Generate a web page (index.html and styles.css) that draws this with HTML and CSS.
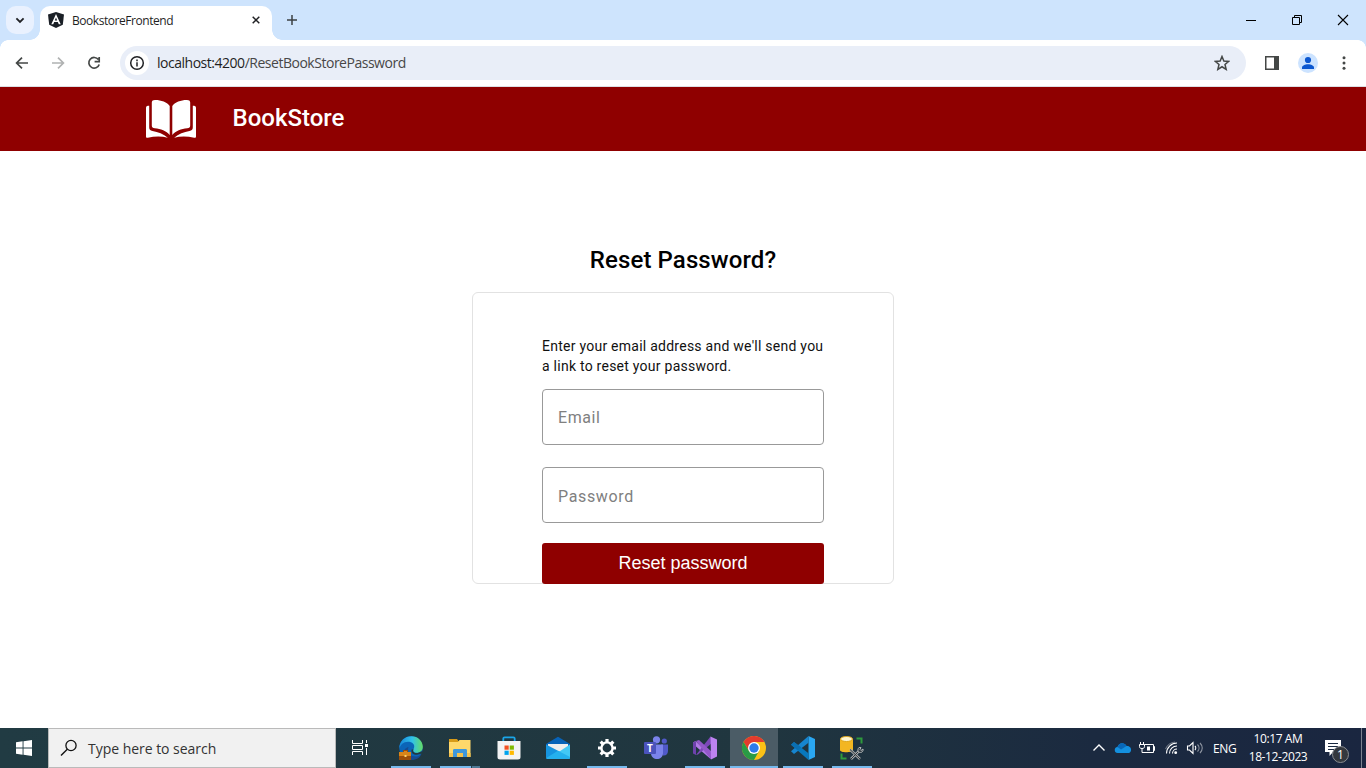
FILE: index.html
```html
<!DOCTYPE html>
<html lang="en">
<head>
<meta charset="utf-8">
<title>BookstoreFrontend</title>
<link rel="stylesheet" href="styles.css">
</head>
<body>
<div class="screen">
  <div class="tabstrip">
    <button class="tab-search" aria-label="Search tabs"><svg width="10" height="7" viewBox="0 0 10 7"><path d="M1.4 1.3 5 4.9l3.6-3.6" fill="none" stroke="#202124" stroke-width="1.8"/></svg></button>
    <div class="tab">
      <svg class="favicon" width="16" height="16" viewBox="0 0 16 16"><path d="M8 0l8 2.6-1.2 10.2L8 16l-6.800-3.200L0 2.600z" fill="#1a1f26"/><path d="M8 2 3.300 12.200h1.900l1-2.300h3.600l1 2.300h1.900zM8 5.600l1.200 2.800H6.800z" fill="#fff"/></svg>
      <span class="tab-title">BookstoreFrontend</span>
      <svg class="tab-close" width="8" height="8" viewBox="0 0 8 8"><path d="M.7.7l6.600 6.600M7.300.7.7 7.300" stroke="#202124" stroke-width="1.500"/></svg>
    </div>
    <svg class="new-tab" width="10" height="10" viewBox="0 0 10 10"><path d="M5 0v10M0 5h10" stroke="#3c4043" stroke-width="1.500"/></svg>
    <div class="window-controls">
      <svg width="46" height="40" viewBox="0 0 46 40"><path d="M18 20.500h10" stroke="#000"/></svg>
      <svg width="46" height="40" viewBox="0 0 46 40"><path d="M18.500 17.500h7v7h-7zM20.500 17.500v-2h7v7h-2" fill="none" stroke="#000"/></svg>
      <svg width="46" height="40" viewBox="0 0 46 40"><path d="M18 15l10 10M28 15 18 25" stroke="#000" stroke-width="1.100"/></svg>
    </div>
  </div>

  <div class="toolbar">
    <div class="nav">
      <svg width="36" height="36" viewBox="0 0 36 36"><path d="M24 18H13M18 12.600 12.600 18l5.400 5.400" fill="none" stroke="#444746" stroke-width="1.700"/></svg>
      <svg width="36" height="36" viewBox="0 0 36 36"><path d="M12 18h11M18 12.600l5.400 5.400-5.400 5.400" fill="none" stroke="#b0b2b2" stroke-width="1.700"/></svg>
      <svg width="36" height="36" viewBox="0 0 36 36"><path d="M22.400 14.600A5.300 5.300 0 1 0 23.200 19.400M23.200 12v4.600h-4.600" fill="none" stroke="#444746" stroke-width="1.700"/></svg>
    </div>
    <div class="omnibox">
      <span class="site-info"><svg width="16" height="16" viewBox="0 0 16 16"><circle cx="8" cy="8" r="6.300" fill="none" stroke="#202124" stroke-width="1.500"/><path d="M8 7.200v4.200M8 4.600v1.600" stroke="#202124" stroke-width="1.500"/></svg></span>
      <span class="url"><b>localhost:4200</b>/ResetBookStorePassword</span>
      <svg class="star" width="16" height="16" viewBox="0 0 16 16"><path d="M8 1.500l1.850 4.500 4.850.4-3.700 3.150 1.150 4.750L8 11.750 3.850 14.300 5 9.550 1.300 6.400 6.150 6z" fill="none" stroke="#444746" stroke-width="1.500"/></svg>
    </div>
    <div class="actions">
      <svg width="36" height="36" viewBox="0 0 36 36"><path d="M11.750 11.750h12.500v12.500h-12.500z" fill="none" stroke="#444746" stroke-width="1.500"/><path d="M20 11h5v14h-5z" fill="#444746"/></svg>
      <svg width="36" height="36" viewBox="0 0 36 36"><circle cx="18" cy="18" r="10" fill="#cce3ff"/><circle cx="18" cy="15" r="3.100" fill="#0b57d0"/><path d="M12 24v-1.500c0-2 3-3.300 6-3.300s6 1.300 6 3.300V24z" fill="#0b57d0"/></svg>
      <svg width="36" height="36" viewBox="0 0 36 36" fill="#444746"><circle cx="18" cy="12.800" r="1.500"/><circle cx="18" cy="18" r="1.500"/><circle cx="18" cy="23.200" r="1.500"/></svg>
    </div>
  </div>

  <header class="site-header">
    <svg width="52" height="40" viewBox="0 0 52 40"><g fill="#fff"><path d="M24.700 7C22.500 3 15 .8 10 1 8 1 6.800 1.800 6.800 3.500v23c0 2 1 2.700 3 2.800 6 .5 11.500 2.700 14.900 6.700z"/><path d="M27.300 7c2.200-4 9.700-6.200 14.700-6 2 0 3.200.8 3.200 2.500v23c0 2-1 2.700-3 2.800-6 .5-11.500 2.700-14.900 6.700z"/><path d="M4.200 6.800C2 6.800 1 7.200 1 9v28.500c0 1 .6 1.500 1.800 1.200 7-1.500 14-1.500 20 0C18.500 35 13 33 7.500 32c-2.400-.4-3.300-1.300-3.300-3.700z"/><path d="M47.800 6.800c2.200 0 3.200.4 3.200 2.200v28.500c0 1-.6 1.500-1.800 1.200-7-1.500-14-1.500-20 0C33.500 35 39 33 44.500 32c2.400-.4 3.300-1.300 3.300-3.700z"/></g></svg>
    <span class="brand">BookStore</span>
  </header>

  <main class="page">
    <h1 class="title">Reset Password?</h1>
    <form class="card">
      <p class="hint">Enter your email address and we'll send you<br>a link to reset your password.</p>
      <input class="field" type="text" placeholder="Email">
      <input class="field field-password" type="password" placeholder="Password">
      <button class="submit" type="button">Reset password</button>
    </form>
  </main>

  <footer class="taskbar">
    <div class="start"><svg width="16" height="16" viewBox="0 0 16 16"><path d="M0 2.200 6.600 1.300v6.300H0zM7.500 1.200 16 0v7.600H7.500zM0 8.400h6.600v6.300L0 13.800zM7.500 8.400H16V16l-8.500-1.200z" fill="#fff"/></svg></div>
    <div class="search">
      <svg width="18" height="18" viewBox="0 0 18 18"><circle cx="11" cy="6.500" r="5.100" fill="none" stroke="#111" stroke-width="1.300"/><path d="M7.300 10.200 1 16.500" stroke="#111" stroke-width="1.400"/></svg>
      <span>Type here to search</span>
    </div>
    <div class="apps">
      <div class="app task-view"><svg width="24" height="24" viewBox="0 0 24 24"><path d="M4.500 4v3.500h10V4M4.500 19v-3.500h10V19M4.500 9.500h10v4h-10zM18.500 4v3M18.500 12v7" fill="none" stroke="#fff"/><path d="M17 8h3v3h-3z" fill="#fff"/></svg></div>
      <div class="app running"><svg width="24" height="24" viewBox="0 0 24 24"><defs><linearGradient id="edge-top" x1="0" x2="1"><stop stop-color="#1686d9"/><stop offset=".55" stop-color="#31c2e8"/><stop offset="1" stop-color="#64dc65"/></linearGradient></defs><circle cx="12" cy="12" r="11.700" fill="#0b65b8"/><path d="M.3 13C.2 5 6 .3 12.500.3c6.500 0 11.300 5 11.300 10.500 0 4-3 6-6.300 6-3 0-4.500-1.500-3-3.500 2.500-5-1.500-7.500-5.500-7.500C4.500 5.800 1 9 .3 13z" fill="url(#edge-top)"/><path d="M9.500 11c-2 6 2.500 10 8 9.500 2 0 4-1 5-2.500-3 7-12 7.500-17 3-3-4 0-9 4-10z" fill="#174b91"/><path d="M14.500 13.200c-1.500 4 4 5 8 2l1.500 2-6 1.500c-4 0-6-2-5.500-5z" fill="#213943"/><path d="M4 16v-1.500h5V16h3v8H0v-8z" fill="#d78519"/><path d="M0 20h12v4H0zM4 16v-2h5v2H8v-1H5v1z" fill="#9c4e08"/><path d="M5.500 19h2v2h-2z" fill="#ffd36a"/></svg></div>
      <div class="app running grouped"><svg width="24" height="24" viewBox="0 0 24 24"><path d="M1 3h8l1.500 2H22v5H1z" fill="#d89b18"/><path d="M1 6h9l1.500-2H22.500v17H1z" fill="#ffd86b"/><path d="M1 17h21.500v4H1z" fill="#f5c34d"/><path d="M5 21v-6.500c0-1 .5-1.500 1.500-1.500h11c1 0 1.500.5 1.500 1.500V21h-4v-4H9v4z" fill="#3e98dc"/></svg></div>
      <div class="app"><svg width="24" height="24" viewBox="0 0 24 24"><path d="M6.300 6V2.600c0-.8.5-1.300 1.300-1.300h8.800c.8 0 1.300.5 1.300 1.300V6" fill="none" stroke="#1aa5e8" stroke-width="1.800"/><path d="M.5 5h23v16c0 1.800-1 2.500-2.500 2.500H3C1.500 23.500.5 22.800.5 21z" fill="#f3f3f4"/><path d="M7.500 9.500h4.200v4.200H7.500z" fill="#f25022"/><path d="M12.700 9.500h4.200v4.200h-4.200z" fill="#7fba00"/><path d="M7.500 14.700h4.200v4.200H7.500z" fill="#00a4ef"/><path d="M12.700 14.700h4.200v4.200h-4.200z" fill="#ffb900"/></svg></div>
      <div class="app"><svg width="24" height="24" viewBox="0 0 24 24"><path d="M0 8 12 .8 24 8v5H0z" fill="#0763b8"/><path d="M2 8h20v8l-10 4-10-4z" fill="#eee"/><path d="M0 8.500 24 21c0 1.500-.5 2-2 2H2c-1.500 0-2-.5-2-2z" fill="#1794df"/><path d="M24 8.500 2 23h20c1.500 0 2-.5 2-2z" fill="#43c8f5"/><path d="M12 14.800 24 21c0 1.500-.5 2-2 2H2c-1 0-1.500-.3-1.800-1z" fill="#25b0ed"/></svg></div>
      <div class="app running"><svg width="24" height="24" viewBox="0 0 24 24"><g stroke="#fff" stroke-width="3.200"><path d="M12 3v4M12 17v4M3 12h4M17 12h4M5.640 5.640l2.800 2.800M15.560 15.560l2.800 2.800M5.640 18.360l2.800-2.800M15.560 8.440l2.800-2.800"/></g><circle cx="12" cy="12" r="5.600" fill="#20353f" stroke="#fff" stroke-width="2.400"/></svg></div>
      <div class="app"><svg class="teams" width="24" height="24" viewBox="0 0 24 24"><circle cx="20.300" cy="5" r="2.600" fill="#5059c9"/><circle cx="12.500" cy="3.800" r="3.600" fill="#7b83eb"/><path d="M17 8.500h7V15c0 3-2 5-5 4.500z" fill="#5059c9"/><path d="M7 8.500h12V17c0 4-3 6-6 6s-6-2-6-6z" fill="#7b83eb"/><rect y="6" width="12" height="12" rx="1" fill="#4b53bc"/><text x="6" y="15.600" text-anchor="middle" fill="#fff">T</text></svg></div>
      <div class="app running"><svg width="24" height="24" viewBox="0 0 24 24"><path d="M0 6.500 2.500 5 15 17l3 6.300L0 8z" fill="#b17be6"/><path d="M0 6.500 3 5v14l-3-1.500z" fill="#6e42ad"/><path d="M3 19 17.500.5 19 7 5 18.500z" fill="#7c48b8"/><path d="M3 5l3-1 13 12-1 7.500z" fill="#9358c9"/><path d="M17.500.5 24 3.500v17l-6 3z" fill="#bd83f0"/></svg></div>
      <div class="app running active"><svg width="24" height="24" viewBox="0 0 24 24"><circle cx="12" cy="12" r="12" fill="#fbc116"/><path d="M1.600 6A12 12 0 0 1 22.400 6H12L7 15z" fill="#e33b2e"/><path d="M1.600 6A12 12 0 0 0 12 24l5-9-10 0z" fill="#299b46"/><circle cx="12" cy="12" r="6" fill="#fff"/><circle cx="12" cy="12" r="4.700" fill="#2d7bea"/></svg></div>
      <div class="app running"><svg width="24" height="24" viewBox="0 0 24 24"><path d="M17.500 0 24 3v18l-6.500 3z" fill="#2aa7f2"/><path d="M17.500 0v6.700L3 18l-3-2.700z" fill="#1685cf"/><path d="M0 8.700 3 6l14.500 11.300V24z" fill="#0878bd"/><path d="M0 8.700 3 6l7 5.300-3 3z" fill="#0b6fb1"/></svg></div>
      <div class="app running"><svg width="24" height="24" viewBox="0 0 24 24"><path d="M0 3v11c0 3 12 3 13 0V3z" fill="#f3b622"/><ellipse cx="6.500" cy="3" rx="6" ry="2.500" fill="#fff5ce" stroke="#dfa61b"/><path d="M16.500 2.500h5v5M1.500 17.500v5h5" fill="none" stroke="#2e9a3d" stroke-width="2"/><path d="M10 13.500 20 23M20 14 11 23" stroke="#a4a8aa" stroke-width="2.500"/><path d="M10 13.500 20 23M20 14 11 23" stroke="#30363a" stroke-width="1"/><path d="M19 11.500c-2 2-1 5 1.500 5 2 0 3-2 2.500-3.500l-2 1.500-1-1 1-2z" fill="#313c43" stroke="#b2b5b7"/></svg></div>
    </div>
    <div class="tray">
      <svg width="24" height="24" viewBox="0 0 24 24"><path d="m6.500 14.500 5.500-5.500 5.500 5.500" fill="none" stroke="#fff" stroke-width="1.400"/></svg>
      <svg width="24" height="24" viewBox="0 0 24 24"><path d="M7 17a3 3 0 0 1-.5-6C7.500 6.500 13.500 5.800 15.500 10c3.500-.3 5 2.500 4.500 4.500s-1.500 2.500-3 2.500z" fill="#1490df"/><path d="M6.500 11C7.500 6.500 13.500 5.800 15.500 10L10 13.500z" fill="#0867b8"/></svg>
      <svg width="24" height="24" viewBox="0 0 24 24" fill="none" stroke="#fff"><path d="M9.500 8.500h9v8h-9M18.500 10.500h1v4h-1"/><path d="M12 10.500h3v4h-3z" fill="#fff" stroke="none"/><path d="M5.500 6v3M8.500 6v3M4.500 8.500h5v2c0 1.500-1 2-2.500 2s-2.500-.5-2.500-2zM7 12.500v4h3"/></svg>
      <svg width="24" height="24" viewBox="0 0 24 24" fill="none" stroke="#fff" stroke-width="1.100"><path d="M7.500 17.500A10.500 10.500 0 0 1 18 7M10.500 17.500A7.500 7.500 0 0 1 18 10M13.500 17.500A4.500 4.500 0 0 1 18 13"/><path d="M6.500 13A12 12 0 0 1 16 6" opacity=".35"/><circle cx="16.700" cy="16.700" r="1.400" fill="#fff" stroke="none"/></svg>
      <svg width="24" height="24" viewBox="0 0 24 24" fill="none" stroke="#fff" stroke-width="1.100"><path d="M4.500 10h2L10 6.500v11L6.500 14h-2z"/><path d="M12 10c1 1 1 3 0 4"/><g opacity=".5"><path d="M14.500 8.500c2 2 2 5 0 7M17 7c3 3 3 7 0 10"/></g></svg>
      <span class="lang">ENG</span>
      <div class="clock"><span>10:17 AM</span><span class="date">18-12-2023</span></div>
      <div class="notifications"><svg width="18" height="18" viewBox="0 0 18 18"><path d="M1 1h16v12H9l-3.500 4v-4H1z" fill="#fff"/><path d="M4 4.500h10M4 7.500h10M4 10.500h6" stroke="#1b2a41"/></svg><span class="badge">1</span></div>
    </div>
  </footer>
</div>
</body>
</html>
```

FILE: styles.css
```css
* { box-sizing: border-box; }
body { margin: 0; background: #fff; font-family: Roboto, sans-serif; overflow: hidden; }
button, input { font: inherit; border: 0; padding: 0; }
svg { display: block; flex: none; }
.screen { width: 1366px; height: 768px; display: flex; flex-direction: column; background: #fff; }

.tabstrip { height: 40px; flex: none; display: flex; align-items: center; padding-left: 6px; background: #cee4fd; }
.tab-search { width: 28px; height: 28px; border-radius: 10px; background: #e9f1fe; display: flex; align-items: center; justify-content: center; }
.tab { position: relative; width: 232px; height: 34px; margin: 6px 0 0 6px; padding: 0 12px 6px 8px; border-radius: 10px 10px 0 0; background: #fff; display: flex; align-items: center; }
.tab::before, .tab::after { content: ""; position: absolute; bottom: 0; width: 10px; height: 10px; }
.tab::before { left: -10px; background: radial-gradient(circle at 0 0, transparent 9.5px, #fff 10px); }
.tab::after { right: -10px; background: radial-gradient(circle at 100% 0, transparent 9.5px, #fff 10px); }
.tab-title { margin: 2px 0 0 8px; font: 12px/16px "Open Sans", sans-serif; letter-spacing: -0.45px; color: #1f1f1f; }
.tab-close { margin-left: auto; }
.new-tab { margin-left: 15px; }
.window-controls { display: flex; margin-left: auto; }

.toolbar { height: 47px; flex: none; display: flex; align-items: center; padding: 0 4px; border-bottom: 1px solid #dcdfe4; background: radial-gradient(circle at 8px 8px, #fff 7.5px, #cee4fd 8px) 0 0 / 8px 8px no-repeat, radial-gradient(circle at 0 8px, #fff 7.5px, #cee4fd 8px) 100% 0 / 8px 8px no-repeat, #fff; }
.nav { display: flex; }
.omnibox { width: 1126px; height: 34px; margin-left: 8px; padding: 0 16px 0 5px; border-radius: 17px; background: #e9eef8; display: flex; align-items: center; }
.site-info { width: 24px; height: 24px; border-radius: 50%; background: #fff; display: flex; align-items: center; justify-content: center; }
.url { margin-left: 8px; font: 14px/20px "Open Sans", sans-serif; letter-spacing: -0.48px; color: #474747; }
.url b { font-weight: 400; color: #1f1f1f; }
.star { margin-left: auto; }
.actions { display: flex; margin-left: 8px; }

.site-header { height: 64px; flex: none; display: flex; align-items: center; padding-left: 145px; background: #8f0000; }
.brand { margin: -3px 0 0 35.5px; font-size: 24px; font-weight: 500; color: #fff; }

.page { flex: 1; display: flex; flex-direction: column; align-items: center; padding-top: 93px; }
.title { margin: 0; font-size: 24px; font-weight: 460; line-height: 32px; letter-spacing: .1px; color: #000; }
.card { width: 422px; height: 292px; margin-top: 16px; padding: 43px 69px 0; border: 1px solid #e2e2e2; border-radius: 6px; display: flex; flex-direction: column; }
.hint { margin: 0 0 13px; font-size: 14px; font-weight: 370; line-height: 20px; letter-spacing: .25px; color: #111; white-space: nowrap; }
.field { width: 282px; height: 56px; flex: none; padding: 1px 15px 0; border: 1px solid #999; border-radius: 4px; background: #fff; font-size: 16px; font-weight: 375; letter-spacing: .55px; outline: 0; }
.field::placeholder { color: #808080; opacity: 1; }
.field-password { margin-top: 22px; padding-top: 3px; letter-spacing: .65px; }
.submit { width: 282px; height: 41px; flex: none; margin-top: 20px; padding-bottom: 1px; border-radius: 3px; background: #8f0000; color: #fff; font: 18px/40px "Liberation Sans", sans-serif; }

.taskbar { height: 40px; flex: none; display: flex; background: linear-gradient(90deg, #213b43, #20363f 55%, #1b2a40 80%, #1a2640); color: #fff; font-family: "Open Sans", sans-serif; }
.start { width: 48px; display: flex; align-items: center; justify-content: center; }
.search { width: 288px; display: flex; align-items: center; padding-left: 11px; gap: 10px; border: 1px solid #bababa; background: #f1f1f1; color: #333; font-size: 14px; letter-spacing: -0.03px; }
.apps { display: flex; gap: 1px; }
.app { position: relative; width: 48px; display: flex; align-items: center; justify-content: center; }
.task-view { margin-right: 2px; }
.running::after { content: ""; position: absolute; left: 4px; right: 4px; bottom: 0; height: 2px; background: #76b9ed; }
.grouped::after { background: linear-gradient(90deg, #76b9ed 31px, #263e4a 31px 32px, #4e7995 32px); }
.active { background: #4b5c66; }
.active::after { left: 0; right: 0; }
.teams text { font: 700 10px "Open Sans", sans-serif; }
.tray { margin-left: auto; display: flex; align-items: center; font-size: 12px; }
.lang { width: 37px; padding-left: 6px; letter-spacing: -0.4px; }
.clock { width: 70px; display: flex; flex-direction: column; align-items: center; line-height: 18px; letter-spacing: -0.4px; white-space: nowrap; margin: -1px 1px 0 -1px; }
.notifications { position: relative; width: 48px; height: 40px; padding: 11px 0 0 10px; border-right: 1px solid #7b8390; margin-right: 4px; }
.badge { position: absolute; left: 18px; top: 18px; width: 17px; height: 17px; border: 1px solid #8a8d91; border-radius: 50%; background: #34383e; font-size: 12px; line-height: 15px; text-align: center; }
```
